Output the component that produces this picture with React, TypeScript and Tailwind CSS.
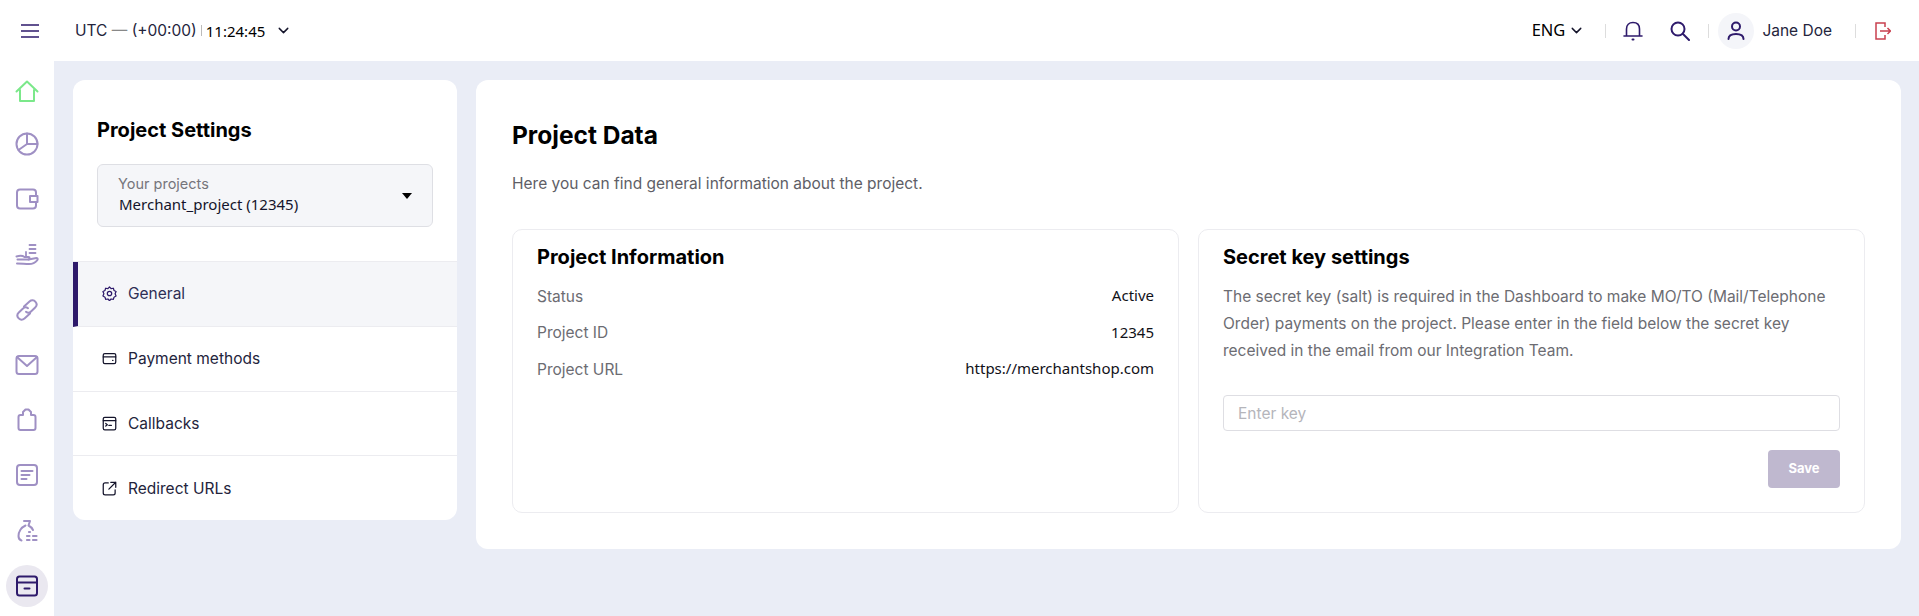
import React from 'react';
import { ChevronDown } from 'lucide-react';

const purple = '#2E1A6B';

function NavIcon({ children, active }: { children: React.ReactNode; active?: boolean }) {
  return (
    <div className="h-[55.2px] flex items-center justify-center pt-[1px]">
      <div className={active ? 'w-[42px] h-[42px] rounded-full bg-[#EAE8F0] flex items-center justify-center' : 'w-[42px] h-[42px] flex items-center justify-center'}>
        {children}
      </div>
    </div>
  );
}

function Glyph({ children, color = '#9F90C4', size = 24 }: { children: React.ReactNode; color?: string; size?: number }) {
  return (
    <svg width={size} height={size} viewBox="0 0 24 24" fill="none" stroke={color} strokeWidth="2" strokeLinecap="round" strokeLinejoin="round">
      {children}
    </svg>
  );
}

const navIcons = [
  <div className="translate-y-[2px]"><Glyph color="#7BE88A"><path d="M1.500 12.500 12 2.500l10.500 10" /><path d="M5 11v11h14V11" /></Glyph></div>,
  <Glyph><circle cx="12" cy="12" r="10.500" /><path d="M12 1.500V12h10.500M12 12l-8.500 6" /></Glyph>,
  <Glyph><path d="M21 9V5.500c0-2-1-3-3-3H5c-2 0-3 1-3 3v13c0 2 1 3 3 3h13c2 0 3-1 3-3V15" /><path d="M15 9h7.500v6H15z" /></Glyph>,
  <Glyph><path d="M1.500 13.500c3.500-1 6-1 8 .5h4c1.500 0 1.500 2.500 0 2.500H2.500" /><path d="M13.500 16.500l8-1.500c1.500 0 1.500 1.500.5 2.500-2 2.500-5 3.500-8 3.500-4 0-7.500-.5-12-.5" /><path d="M14.500 2h6M14.500 6h6M14.500 10h6M11 9v4" strokeWidth="1.800" /></Glyph>,
  <Glyph><path d="M9 8.500 14.500 3.500c2-1.800 4.500-1.500 6 .3s1.500 4-.3 5.700l-4.200 4c-1.500 1.500-3.500 1.500-5 .3" /><path d="M15 15.500 9.500 20.500c-2 1.800-4.500 1.500-6-.3s-1.500-4 .3-5.700l4.200-4c1.500-1.500 3.500-1.500 5-.3" /></Glyph>,
  <Glyph><rect x="1.500" y="3" width="21" height="18" rx="2.500" /><path d="m2 4 10 9 10-9" /></Glyph>,
  <Glyph><path d="M3.500 9c0-1.500 1-2 2-2H8V4l2.500-2.500h3L16 4v3h2.500c1 0 2 .5 2 2v11c0 1.500-1 2-2 2h-13c-1 0-2-.5-2-2z" /></Glyph>,
  <Glyph><rect x="2" y="2" width="20" height="20" rx="3" /><path d="M6.500 8h11M6.500 12h8M6.500 16h5" /></Glyph>,
  <Glyph><path d="M9 2h6l-1.500 4.500c2 1 3.500 2.500 4.500 4.500M10.500 6.500C6 8.500 3.500 13 3.500 17c0 2 1 4 3 4.500" /><path d="M12 17h2.500M12 21h2.500M18 17h3.500M18 21h3.500M14 13h1" strokeWidth="2.200" /></Glyph>,
  <Glyph color={purple}><rect x="2" y="2.500" width="20" height="19" rx="2.500" /><path d="M2 8.500h20M9.500 14.500h5" /></Glyph>,
];

const menuItems = [
  {
    label: 'General',
    active: true,
    icon: <Glyph color={purple} size={15}><circle cx="12" cy="12" r="3.500" /><path d="M12 1.500l2.500 2.700 3.700-.6 1 3.500 3.300 1.800L21 12.500l1.500 3.600-3.300 1.800-1 3.500-3.700-.6L12 23.500l-2.500-2.700-3.700.6-1-3.500-3.300-1.800L3 12.500 1.500 8.900l3.300-1.800 1-3.500 3.700.6z" /></Glyph>,
  },
  {
    label: 'Payment methods',
    icon: <Glyph color="#14142b" size={15}><rect x="2" y="4" width="20" height="16" rx="2.500" /><path d="M2 9.500h20M17 15h.5" /></Glyph>,
  },
  {
    label: 'Callbacks',
    icon: <Glyph color="#14142b" size={15}><rect x="2" y="2" width="20" height="20" rx="2.500" /><path d="M2 7.500h20M6 12l2.500 2L6 16M11 15h4" /></Glyph>,
  },
  {
    label: 'Redirect URLs',
    icon: <Glyph color="#14142b" size={15}><path d="M10 3H5C3 3 2 4 2 6v13c0 2 1 3 3 3h13c2 0 3-1 3-3v-5" /><path d="M14 2h8v8M22 2 11 13" /></Glyph>,
  },
];

function InfoRow({ label, value }: { label: string; value: string }) {
  return (
    <div className="flex justify-between h-[36.500px] items-center">
      <span className="text-[#6c6c72]">{label}</span>
      <span className="text-[#111118] font-['Noto_Sans',sans-serif] text-[15px] -mt-[2px]">{value}</span>
    </div>
  );
}

export default function App() {
  return (
    <div className="w-[1919px] h-[616px] overflow-hidden bg-[#EAEDF6] flex flex-col text-[15.500px] text-[#14142b] font-['Inter','Lato',sans-serif]">
      {/* top bar */}
      <header className="h-[61px] bg-white flex items-center shrink-0">
        <div className="w-[54px] flex justify-center pl-[6px]">
          <svg width="18" height="14" viewBox="0 0 18 14" fill="none" stroke={purple} strokeWidth="1.400">
            <path d="M0 1h18M0 7h18M0 13h18" />
          </svg>
        </div>
        <div className="ml-[21px] flex items-center">
          <span className="text-[#24243c]">UTC <span className="text-[#888]">—</span> (+00:00)</span>
          <span className="w-px h-[11px] bg-[#bbb] mx-[4px]" />
          <span className="text-black mt-[1px] font-['Noto_Sans',sans-serif] text-[15px]">11:24:45</span>
          <ChevronDown size={17} className="ml-[10px] text-[#14142b]" />
        </div>
        <div className="ml-auto flex items-center pr-[28px]">
          <span className="text-black font-['Noto_Sans',sans-serif] text-[16.500px]">ENG</span>
          <ChevronDown size={17} className="ml-[3px] text-[#14142b]" />
          <span className="w-px h-[14px] bg-[#ddd] ml-[20px]" />
          <svg width="20" height="20" viewBox="0 0 20 20" fill="none" stroke={purple} strokeWidth="1.600" strokeLinecap="round" className="ml-[17px]">
            <path d="M1 15h18M3.500 15V8c0-4 2.500-6.500 6.500-6.500S16.500 4 16.500 8v7" />
            <path d="M9.500 18.500h1" strokeWidth="2" />
          </svg>
          <svg width="20" height="20" viewBox="0 0 20 20" fill="none" stroke={purple} strokeWidth="2" strokeLinecap="round" className="ml-[27px]">
            <circle cx="8" cy="8" r="6.500" />
            <path d="m13 13 6 6" />
          </svg>
          <span className="w-px h-[14px] bg-[#ddd] ml-[18px]" />
          <div className="w-[36px] h-[36px] rounded-full bg-[#F4F5F9] flex items-center justify-center ml-[9px]">
            <svg width="18" height="19" viewBox="0 0 18 19" fill="none" stroke={purple} strokeWidth="2" strokeLinecap="round">
              <circle cx="9" cy="5.500" r="4" />
              <path d="M1.500 18c0-3.500 3-5 7.500-5s7.500 1.500 7.500 5" />
            </svg>
          </div>
          <span className="ml-[8px] text-[#24243c]">Jane Doe</span>
          <span className="w-px h-[14px] bg-[#ddd] ml-[23px]" />
          <svg width="16" height="18" viewBox="0 0 16 18" fill="none" stroke="#C9404F" strokeWidth="1.500" className="ml-[19px]">
            <path d="M10 5V1H1v16h9v-4" />
            <path d="M5 9h10.500M12.500 6l3 3-3 3" />
          </svg>
        </div>
      </header>

      <div className="flex flex-1 min-h-0">
        {/* sidebar */}
        <aside className="w-[54px] bg-white shrink-0 flex flex-col">
          {navIcons.map((icon, i) => (
            <NavIcon key={i} active={i === navIcons.length - 1}>{icon}</NavIcon>
          ))}
        </aside>

        <div className="flex items-start flex-1 gap-[19px] pt-[19px] pl-[19px] pr-[18px]">
          {/* project settings card */}
          <section className="w-[384px] h-[440px] bg-white rounded-[12px] overflow-hidden shrink-0 flex flex-col">
            <div className="h-[182px] px-[24px] pt-[36px] border-b border-[#ECECF0]">
              <h2 className="text-[20px] leading-[28px] font-bold text-black">Project Settings</h2>
              <div className="mt-[20px] h-[63px] rounded-[6px] border border-[#DEDFE4] bg-[#F5F6F9] flex items-center pl-[20px] pr-[20px] justify-between">
                <div className="-mt-[2px]">
                  <div className="text-[#75757c] text-[14.500px] leading-[20px]">Your projects</div>
                  <div className="text-[#14142b] leading-[21px] pl-[1px] font-['Noto_Sans',sans-serif] text-[15px]">Merchant_project (12345)</div>
                </div>
                <span className="w-0 h-0 border-x-[5.500px] border-x-transparent border-t-[6px] border-t-black" />
              </div>
            </div>
            {menuItems.map((item) => (
              <div
                key={item.label}
                className={
                  item.active
                    ? 'flex-1 flex items-center border-b border-[#ECECF0] bg-[#F5F6F9] border-l-[5px] border-l-[#2E1A6B] pl-[24px]'
                    : 'flex-1 flex items-center border-b border-[#ECECF0] last:border-b-0 pl-[29px]'
                }
              >
                {item.icon}
                <span className={item.active ? 'ml-[11px] text-[#2E2E55]' : 'ml-[11px] text-[#24243c]'}>{item.label}</span>
              </div>
            ))}
          </section>

          {/* project data card */}
          <main className="flex-1 h-[469px] bg-white rounded-[12px] px-[36px] pt-[41px]">
            <h1 className="text-[24.500px] leading-[28px] font-bold text-black">Project Data</h1>
            <p className="mt-[24px] text-[#5e5e66] leading-[22px]">Here you can find general information about the project.</p>
            <div className="mt-[34px] grid grid-cols-2 gap-[19px] h-[284px]">
              <div className="rounded-[10px] border border-[#ECECF0] px-[24px] pt-[14px]">
                <h3 className="text-[20px] leading-[26px] font-bold text-black mb-[8px]">Project Information</h3>
                <InfoRow label="Status" value="Active" />
                <InfoRow label="Project ID" value="12345" />
                <InfoRow label="Project URL" value="https://merchantshop.com" />
              </div>
              <div className="rounded-[10px] border border-[#ECECF0] px-[24px] pt-[14px] flex flex-col">
                <h3 className="text-[20px] leading-[26px] font-bold text-black">Secret key settings</h3>
                <p className="mt-[13px] text-[#6c6c72] leading-[27px]">
                  The secret key (salt) is required in the Dashboard to make MO/TO (Mail/Telephone Order) payments on the project. Please enter in the field below the secret key received in the email from our Integration Team.
                </p>
                <input
                  placeholder="Enter key"
                  className="mt-[31px] h-[36px] shrink-0 rounded-[4px] border border-[#DEDEE3] px-[14px] outline-none placeholder:text-[#B5B5BB]"
                />
                <button className="mt-[19px] self-end w-[72px] h-[38px] shrink-0 rounded-[4px] bg-[#BFB8CF] text-white text-[13px] font-bold">Save</button>
              </div>
            </div>
          </main>
        </div>
      </div>
    </div>
  );
}
